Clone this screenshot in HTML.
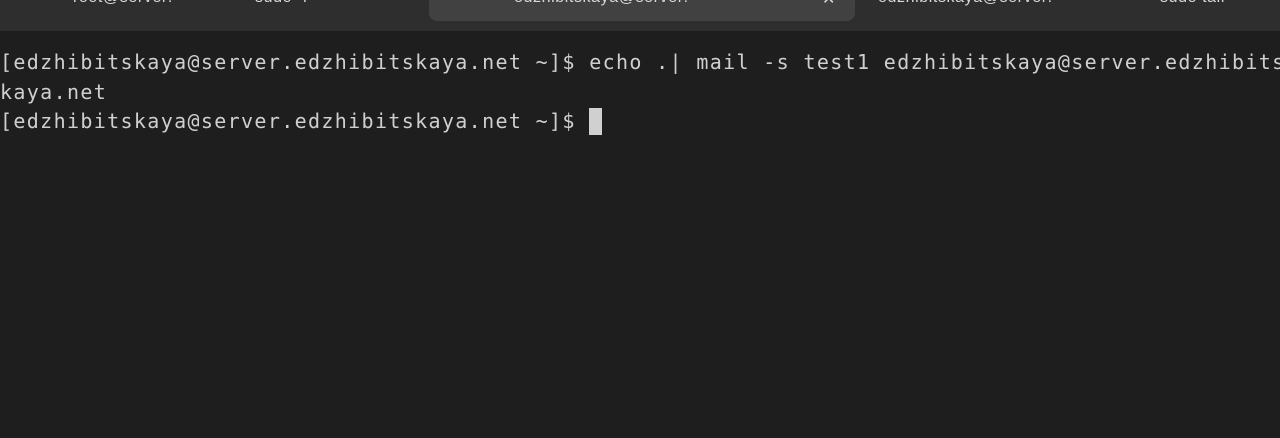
<!DOCTYPE html>
<html><head><style>
html,body{margin:0;padding:0;width:1280px;height:438px;overflow:hidden;background:#1e1e1e}
.hdr{position:absolute;left:0;top:0;width:1280px;height:31px;background:#2e2e2e}
.tab{position:absolute;left:429px;top:-10px;width:426px;height:31px;background:#414141;border-radius:8px}
.t{position:absolute;top:-11px;font:16px "Liberation Sans",sans-serif;color:#d8d8d8;white-space:nowrap;letter-spacing:0.6px}
.term{position:absolute;left:0;top:48px;font:20px/29.6px "DejaVu Sans Mono",monospace;letter-spacing:1.35px;color:#cfcfcf;white-space:pre}
.cur{display:inline-block;width:13px;height:27px;background:#d0d0d0;vertical-align:-7px}
</style></head><body>
<div class="hdr"></div>
<div class="tab"></div>
<div class="t" style="left:73px">root@server:</div>
<div class="t" style="left:255px">sudo -i</div>
<div class="t" style="left:514px">edzhibitskaya@server:</div>
<div class="t" style="left:822px">✕</div>
<div class="t" style="left:878px">edzhibitskaya@server:</div>
<div class="t" style="left:1160px">sudo tail</div>
<div class="term">[edzhibitskaya@server.edzhibitskaya.net ~]$ echo .| mail -s test1 edzhibitskaya@server.edzhibits
kaya.net
[edzhibitskaya@server.edzhibitskaya.net ~]$ <span class="cur"></span></div>
</body></html>
